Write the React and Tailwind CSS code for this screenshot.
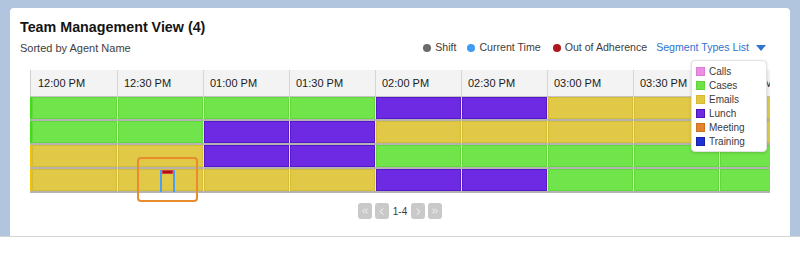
import React from 'react'
import { ChevronsLeft, ChevronLeft, ChevronRight, ChevronsRight } from 'lucide-react'

const times = ['12:00 PM', '12:30 PM', '01:00 PM', '01:30 PM', '02:00 PM', '02:30 PM', '03:00 PM', '03:30 PM', '04:00 PM']

const rows = [
  ['g', 'g', 'g', 'g', 'p', 'p', 'y', 'y', 'y'],
  ['g', 'g', 'p', 'p', 'y', 'y', 'y', 'y', 'y'],
  ['y', 'y', 'p', 'p', 'g', 'g', 'g', 'g', 'g'],
  ['y', 'y', 'y', 'y', 'p', 'p', 'g', 'g', 'g'],
]

const block = {
  g: 'bg-[#71e34b] border-[#63d83b]',
  y: 'bg-[#e1c947] border-[#d6bc34]',
  p: 'bg-[#6d2ae2] border-[#5519c9]',
}

const stripe = {
  g: 'border-l-[#40df10]',
  y: 'border-l-[#efc300]',
  p: 'border-l-[#5519c9]',
}

const segments = [
  { label: 'Calls', color: 'bg-[#ea8ee2] border-[#df7ad6]' },
  { label: 'Cases', color: 'bg-[#6fe24a] border-[#5ed539]' },
  { label: 'Emails', color: 'bg-[#e3c943] border-[#d6b930]' },
  { label: 'Lunch', color: 'bg-[#6d2ae2] border-[#4a14b8]' },
  { label: 'Meeting', color: 'bg-[#e2842f] border-[#cf7120]' },
  { label: 'Training', color: 'bg-[#1f30d8] border-[#1522a8]' },
]

const PageBtn = ({ children }) => (
  <div className="w-[14px] h-[16px] rounded-[3px] bg-[#c9c9c9] flex items-center justify-center text-white">
    {children}
  </div>
)

export default function App() {
  return (
    <div className="w-[800px] h-[260px] bg-white font-['Liberation_Sans',Arial,sans-serif] overflow-hidden">
      <div className="h-[236px] bg-[#b2c5df] px-[10px] pt-[8px] flex">
        <div className="relative flex-1 bg-white rounded-t-[4px] px-[10px] pt-[10px]">
          <h1 className="h-[18px] leading-[18px] text-[14.3px] font-bold text-[#141414]">Team Management View (4)</h1>

          <div className="mt-[4px] h-[16px] flex items-center justify-between pr-[14px]">
            <span className="text-[11px] text-[#3e3e3c]">Sorted by Agent Name</span>
            <div className="flex items-center text-[10.6px] text-[#3e3e3c]">
              <span className="w-[8px] h-[8px] rounded-full bg-[#6b6b6b]" />
              <span className="ml-[4px]">Shift</span>
              <span className="ml-[11px] w-[8px] h-[8px] rounded-full bg-[#3f9cf2]" />
              <span className="ml-[4px]">Current Time</span>
              <span className="ml-[12px] w-[8px] h-[8px] rounded-full bg-[#b0161d]" />
              <span className="ml-[4px]">Out of Adherence</span>
              <span className="ml-[9px] text-[#2f72d2]">Segment Types List</span>
              <svg className="ml-[7px]" width="10" height="6" viewBox="0 0 10 6">
                <path d="M0 0 L10 0 L5 6 Z" fill="#2f72d2" />
              </svg>
            </div>
          </div>

          <div className="mt-[14px] mx-[10px] w-[740px] overflow-hidden">
            <div className="flex h-[27px] bg-[#f3f3f3] border-b border-[#c4c4c4] text-[11px] text-[#1b1b1b]">
              {times.map((t, i) => (
                <div
                  key={t}
                  className={
                    i === 0
                      ? 'w-[87px] shrink-0 border-l border-[#cfcfcf] pl-[7px] flex items-center whitespace-nowrap'
                      : 'w-[86px] shrink-0 border-l border-[#d6d6d6] pl-[6px] flex items-center whitespace-nowrap'
                  }
                >
                  {t}
                </div>
              ))}
            </div>
            {rows.map((row, r) => (
              <div key={r} className="flex h-[24px] border-b-2 border-[#b3b3b3]">
                {row.map((c, i) => (
                  <div
                    key={i}
                    className={
                      i === 0
                        ? `w-[87px] shrink-0 flex border-l-2 ${stripe[c]}`
                        : 'w-[86px] shrink-0 flex border-l border-[#e6e6e6]'
                    }
                  >
                    <div className={`flex-1 border ${block[c]}`} />
                  </div>
                ))}
              </div>
            ))}
          </div>

          <div className="mt-[10px] flex items-center justify-center gap-[3px]">
            <PageBtn><ChevronsLeft size={10} strokeWidth={2} /></PageBtn>
            <PageBtn><ChevronLeft size={11} strokeWidth={2} /></PageBtn>
            <span className="px-[1px] text-[10px] text-[#3a3a3a]">1-4</span>
            <PageBtn><ChevronRight size={11} strokeWidth={2} /></PageBtn>
            <PageBtn><ChevronsRight size={10} strokeWidth={2} /></PageBtn>
          </div>

          {/* adherence highlight */}
          <div className="absolute left-[127px] top-[149px] w-[61px] h-[45px] border-2 border-[#e98c2e] rounded-[4px]" />
          <div className="absolute left-[150px] top-[162px] w-[15px] h-[22px] border-x-2 border-[#4a9ff4]">
            <div className="h-[4px] bg-[#b01212] border border-[#d04040]" />
          </div>

          {/* segment types dropdown */}
          <div className="absolute left-[681px] top-[52px] w-[76px] h-[92px] bg-white rounded-[4px] border border-[#e3e3e3] shadow-[0_1px_3px_rgba(0,0,0,0.15)] pt-[3px] pl-[4px]">
            {segments.map((s) => (
              <div key={s.label} className="h-[14px] flex items-center">
                <span className={`w-[9px] h-[9px] border ${s.color}`} />
                <span className="ml-[4px] text-[10px] text-[#3a3a3a]">{s.label}</span>
              </div>
            ))}
          </div>
        </div>
      </div>
      <div className="h-[24px] border-t border-[#d6d6d6] bg-white" />
    </div>
  )
}
